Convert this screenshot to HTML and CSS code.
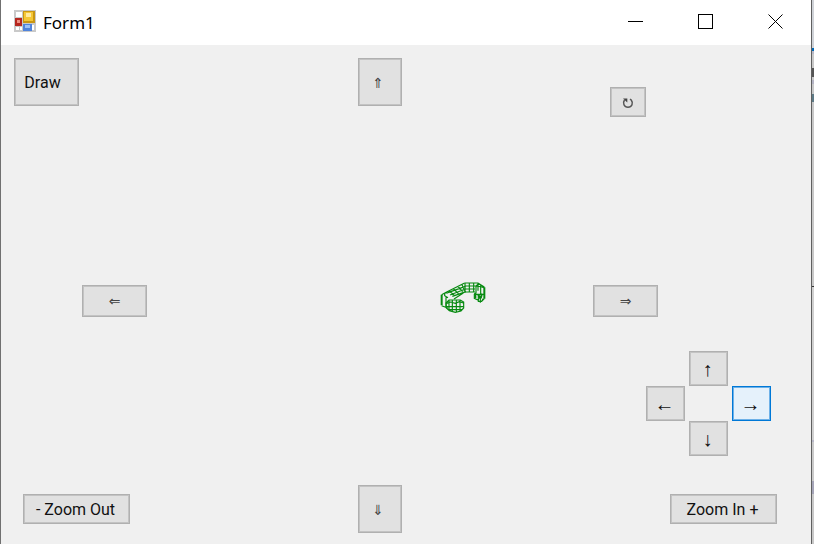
FILE: index.html
```html
<!DOCTYPE html>
<html lang="en">
<head>
<meta charset="utf-8">
<title>Form1</title>
<link rel="stylesheet" href="styles.css">
</head>
<body>
<div class="window">
  <header class="titlebar">
    <svg class="app-icon" viewBox="0 0 22 22" aria-hidden="true">
      <rect width="22" height="22" fill="#c9c9c9"/>
      <path d="M2 2h6v5H2zM2 17h3v3H2zM6 17h2v3H6zM18 15h2v5h-2z" fill="#fff"/>
      <rect x="1" y="8" width="7" height="8" fill="#b5261f"/>
      <rect x="3" y="10" width="3" height="3" fill="#ee8d7f"/>
      <rect x="9" y="1" width="12" height="12" fill="#c99612"/>
      <rect x="10" y="2" width="9" height="9" fill="#f5c736"/>
      <rect x="12" y="3" width="5" height="4" fill="#ffeaa0"/>
      <rect x="9" y="14" width="9" height="7" fill="#4f83dc"/>
      <rect x="11" y="15" width="5" height="3" fill="#9cc1f7"/>
    </svg>
    <h1 class="title">Form1</h1>
    <div class="captions">
      <button class="caption" aria-label="Minimize"><svg viewBox="0 0 16 16"><path d="M0 7.5h15"/></svg></button>
      <button class="caption" aria-label="Maximize"><svg viewBox="0 0 16 16"><path d="M.5.5h14v14H.5z"/></svg></button>
      <button class="caption" aria-label="Close"><svg class="smooth" viewBox="0 0 16 16"><path d="M.5.5l14 14M14.5.5l-14 14"/></svg></button>
    </div>
  </header>
  <main class="form">
    <div class="row row-top">
      <button class="btn draw">Draw</button>
      <button class="btn tall double">⇑</button>
      <button class="btn rotate" aria-label="Rotate">
        <svg viewBox="0 0 12 12" aria-hidden="true"><path d="M2.500 3C.4 6 2 10.300 6 10.300s5.600-4.300 3.200-7.300L8 2.200" class="arc"/><path d="M1 1.500h4.300v4z" class="tip"/></svg>
      </button>
    </div>
    <div class="row row-middle">
      <button class="btn wide double pan-left">⇐</button>
      <svg class="model" viewBox="6 6 138 96" role="img" aria-label="Wireframe handset">
        <path class="heavy" d="M11 47v32M112 43v14M139 25v34M121 47l6 12M132 44l-4 14"/>
        <path d="M11 47l9-5h10M11 80l20 8M20 42v8l10 6M24 55v28M20 42L80 12M30 41L82 22M36 48L82 30M43 52L84 38M48 60L76 42M34 36l16 14M47 30l14 14M60 23l14 15M72 17l8 18"/>
        <path d="M80 12h40l19 12M81 12v27h30M81 21h33M81 30h30M94 12v27M107 12v27M114 21l9-8M120 13v22M114 21v20l-5 5v12l12 6M128 18v28M110 46h29M121 47v20h10l5-8M127 57v14M139 59l-8 8M114 21l14 2 11 3"/>
        <path d="M24 72l9-9h34l10 6v18l-8 9-17 4-18-5-9-8zM33 64v28M43 62v35M55 64v34M66 64v31M26 73l12-4 14 4 12-5 12 4M26 83h50M34 92h37"/>
      </svg>
      <button class="btn wide double">⇒</button>
    </div>
    <div class="pad">
      <button class="btn key up">↑</button>
      <button class="btn key left">←</button>
      <button class="btn key right active">→</button>
      <button class="btn key down">↓</button>
    </div>
    <div class="row row-bottom">
      <button class="btn zoom zoom-out">- Zoom Out</button>
      <button class="btn tall double">⇓</button>
      <button class="btn zoom">Zoom In +</button>
    </div>
  </main>
</div>
<div class="behind" aria-hidden="true"></div>
</body>
</html>
```
FILE: styles.css
```css
* { box-sizing: border-box; }

body {
  margin: 0;
  height: 100vh;
  display: flex;
  overflow: hidden;
  background: #c8c8c8;
  color: #111;
  font-family: Roboto, "Liberation Sans", sans-serif;
}

.window {
  flex: 1;
  display: flex;
  flex-direction: column;
  background: #f0f0f0;
  border-left: 1px solid #707070;
  border-right: 1px solid #606060;
}

.behind {
  width: 2px;
  background: linear-gradient(#cfd2d7 48px, #0067b5 48px 51px, #b9b9c7 51px 54px, #c8c8c8 54px 68px, #555 68px 77px, #c8c8c8 77px 80px, #b4b4c4 80px 84px, #c8c8c8 84px 94px, #5d7a86 94px 102px, #c8c8c8 102px 286px, #333 286px 287px, #d0d0d0 287px 440px, #b8b8c8 440px 442px, #cacaca 442px 481px, #a5a5b8 481px 494px, #c8c8c8 494px);
}

.titlebar {
  height: 45px;
  display: flex;
  align-items: center;
  background: #fff;
  padding-left: 13px;
}

.app-icon { width: 22px; height: 22px; margin-bottom: 4px; }

.title {
  flex: 1;
  margin: 0 0 0 7px;
  padding-bottom: 1px;
  font: 17px "Noto Sans", "Open Sans", sans-serif;
  color: #000;
}

.captions { display: flex; height: 100%; }

.caption {
  width: 70px;
  padding: 0 0 2px;
  border: 0;
  background: none;
  display: flex;
  align-items: center;
  justify-content: center;
}

.caption svg {
  width: 16px;
  height: 16px;
  fill: none;
  stroke: #000;
  shape-rendering: crispEdges;
}

.caption .smooth { shape-rendering: auto; }

.form {
  flex: 1;
  display: grid;
  grid-template-rows: 223fr 70fr 134fr 48px;
  padding: 13px 0 11px;
}

.row { display: grid; justify-items: start; align-items: start; }
.row-top { grid-template-columns: 357fr 252fr 201fr; }
.row-middle { grid-template-columns: 439fr 153fr 218fr; }
.row-bottom { grid-template-columns: 357fr 312fr 141fr; align-items: center; }

.btn {
  padding: 0;
  display: flex;
  align-items: center;
  justify-content: center;
  border: 1px solid #b0b0b0;
  box-shadow: inset 0 0 0 1px #c3c3c3;
  background: #e1e1e1;
  color: #111;
  font: 16px Roboto, "Liberation Sans", sans-serif;
}

.draw { width: 65px; height: 48px; margin-left: 13px; padding-right: 8px; }
.tall { width: 44px; height: 48px; }
.wide { width: 65px; height: 32px; margin-top: 4px; }
.double { font: 14px "DejaVu Sans", sans-serif; color: #444; }
.tall.double { padding: 2px 4px 0 0; }
.pan-left { margin-left: 81px; }

.rotate { width: 36px; height: 30px; margin-top: 29px; }
.rotate svg { width: 12px; height: 12px; margin-top: 2px; }
.arc { fill: none; stroke: #555; stroke-width: 1.5; }
.tip { fill: #444; }

.model {
  width: 46px;
  height: 32px;
  fill: none;
  stroke: #078a10;
  stroke-width: 3.5;
}
.heavy { stroke-width: 6; }

.pad {
  justify-self: end;
  align-self: start;
  display: grid;
  grid-template-columns: 39px 39px 39px;
  grid-template-rows: 35px 35px 35px;
  column-gap: 4px;
  margin-right: 40px;
}

.key { font: 20px "Liberation Sans", sans-serif; padding: 2px 2px 0 0; }
.up { grid-area: 1 / 2; }
.left { grid-area: 2 / 1; }
.right { grid-area: 2 / 3; }
.down { grid-area: 3 / 2; }

.active {
  background: #e5f1fb;
  border-color: #0078d7;
  box-shadow: inset 0 0 0 1px #6db1e8;
}

.zoom { width: 107px; height: 30px; padding-right: 2px; }
.zoom-out { margin-left: 22px; }
```
